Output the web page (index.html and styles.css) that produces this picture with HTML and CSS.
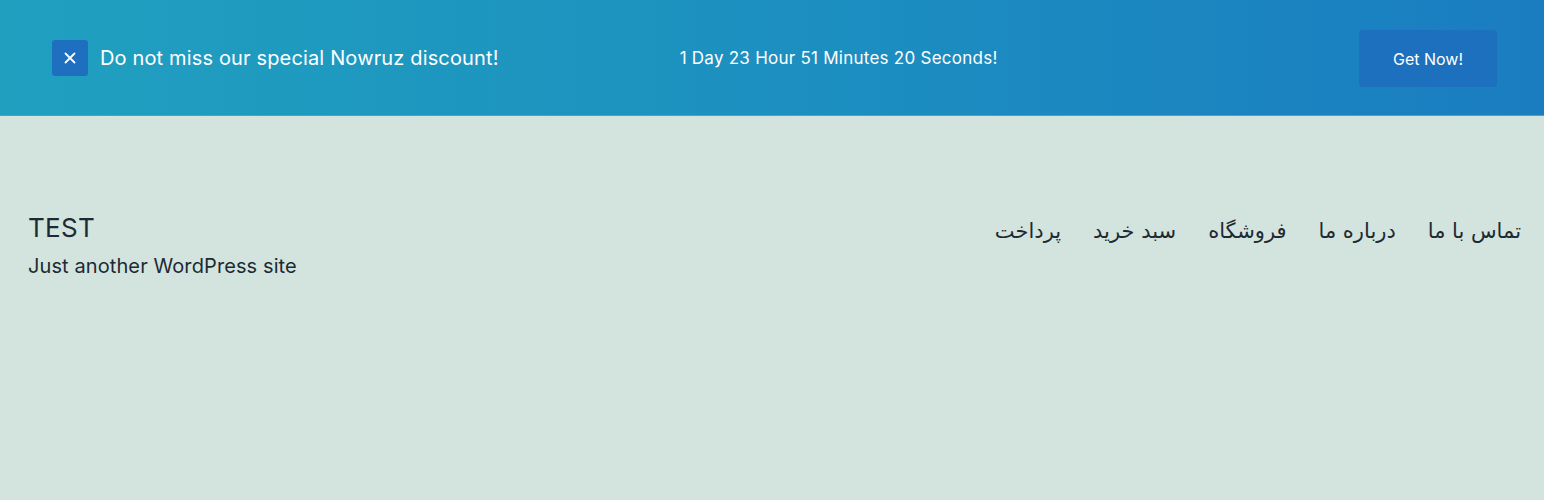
FILE: index.html
```html
<!DOCTYPE html>
<html lang="en">
<head>
<meta charset="utf-8">
<link rel="stylesheet" href="styles.css">
</head>
<body>
<div class="banner">
  <div class="banner-left">
    <button class="close" aria-label="close">
      <svg width="12" height="12" viewBox="0 0 12 12"><path d="M1.5 1.5 L10.5 10.5 M10.5 1.5 L1.5 10.5" stroke="#fff" stroke-width="1.8" stroke-linecap="round"/></svg>
    </button>
    <span class="msg">Do not miss our special Nowruz discount!</span>
  </div>
  <div class="countdown">1 Day 23 Hour 51 Minutes 20 Seconds!</div>
  <a class="cta" href="#">Get Now!</a>
</div>
<header class="site-header">
  <div class="branding">
    <div class="site-title">TEST</div>
    <div class="tagline">Just another WordPress site</div>
  </div>
  <nav class="menu" dir="rtl">
    <a href="#">تماس با ما</a>
    <a href="#">درباره ما</a>
    <a href="#">فروشگاه</a>
    <a href="#">سبد خرید</a>
    <a href="#">پرداخت</a>
  </nav>
</header>
</body>
</html>
```
FILE: styles.css
```css
html, body {
  margin: 0;
  padding: 0;
}
body {
  background: #d3e4de;
  font-family: Inter, "Noto Sans", sans-serif;
  color: #1e2a33;
  height: 500px;
  overflow: hidden;
}
.banner {
  height: 116px;
  box-sizing: border-box;
  display: flex;
  align-items: center;
  padding: 0 47px 0 52px;
  background: linear-gradient(90deg, #20a0bf 0%, #1c90c0 50%, #1a7dc0 100%);
  color: #fff;
  border-bottom: 1px solid #3aa9cc;
}
.banner-left {
  display: flex;
  align-items: center;
  gap: 12px;
}
.close {
  width: 36px;
  height: 36px;
  border: 0;
  border-radius: 3px;
  background: #1e6fc0;
  display: flex;
  align-items: center;
  justify-content: center;
  padding: 0;
}
.msg {
  font-size: 20px;
  letter-spacing: 0.15px;
}
.countdown {
  margin-left: 181px;
  font-size: 17px;
  letter-spacing: 0.25px;
}
.cta {
  margin-left: auto;
  width: 138px;
  height: 57px;
  margin-top: 2px;
  display: flex;
  align-items: center;
  justify-content: center;
  background: #1c70bd;
  border-radius: 4px;
  color: #fff;
  text-decoration: none;
  font-size: 16px;
}
.site-header {
  display: flex;
  justify-content: space-between;
  align-items: flex-start;
  padding: 96px 23px 0 28px;
}
.site-title {
  font-size: 26px;
  line-height: 32px;
  letter-spacing: 0.3px;
}
.tagline {
  font-size: 20px;
  line-height: 26px;
  margin-top: 9px;
  letter-spacing: 0.1px;
}
.menu {
  display: flex;
  gap: 32px;
  padding-top: 7px;
  font-family: "DejaVu Sans", sans-serif;
  font-size: 21px;
}
.menu a {
  color: #1e2a33;
  text-decoration: none;
}
```
